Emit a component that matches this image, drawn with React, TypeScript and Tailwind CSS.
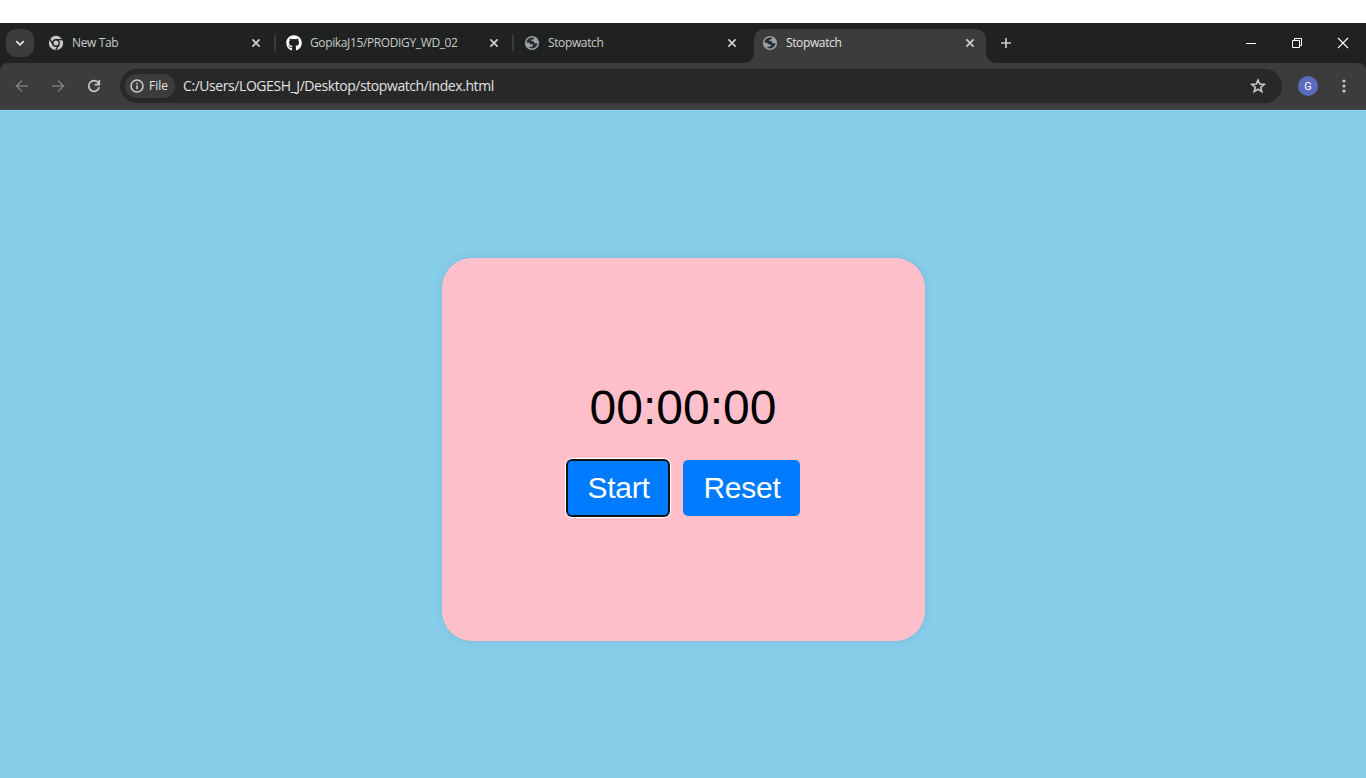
import React from "react";
import { FaGithub } from "react-icons/fa";

const GlobeIcon = () => (
  <svg viewBox="0 0 16 16" className="size-4 shrink-0">
    <circle cx="8" cy="8" r="7.1" fill="#9aa0a6" />
    <path
      d="M2.600 7.800C2.600 4.600 5 2.500 8.500 2.500L10 2.800C10 4 9.500 4.600 8.400 4.600C7.300 4.600 7.100 5.100 7.100 5.900H8.600C9.700 5.900 10.100 6.500 10.100 7.400C10.100 8 10.500 8.300 11.200 8.300H13.400C13.200 11.200 11 13.500 7.800 13.500L5.400 12.800V11.700H7.200C8.200 11.700 8.800 11.200 8.800 10.400C8.800 9.600 8.200 9.300 7.500 9.300C6.600 9.300 6.200 8.900 5.800 8.400C5.400 7.900 4.900 7.800 4.300 7.800Z"
      fill="#292c2e"
    />
  </svg>
);

const ChromeIcon = () => (
  <svg viewBox="0 0 16 16" className="size-4 shrink-0">
    <circle cx="8" cy="8" r="7.2" fill="#c7c9c8" />
    <circle cx="8" cy="8" r="3.900" fill="#202221" />
    <circle cx="8" cy="8" r="2.500" fill="#c7c9c8" />
    <path d="M8 4.700h6.600M5.100 9.700 1.900 4.200M10.900 9.700 7.700 15.200" stroke="#202221" strokeWidth="1.300" fill="none" />
  </svg>
);

const CloseIcon = () => (
  <svg viewBox="0 0 16 16" className="size-4 shrink-0" stroke="#d0d2d1" strokeWidth="1.6" fill="none">
    <path d="m4.400 4.400 7.200 7.200M11.600 4.400l-7.200 7.200" />
  </svg>
);

type TabProps = { icon: React.ReactNode; title: string; separator?: boolean };

const Tab = ({ icon, title, separator }: TabProps) => (
  <div className="flex h-10 w-[238px] shrink-0 items-center pl-[11px]">
    {icon}
    <span className="ml-2 w-[176px] shrink-0 text-[12px] leading-4 tracking-[-0.37px] whitespace-nowrap text-[#c9cbca]">
      {title}
    </span>
    <CloseIcon />
    {separator && <span className="ml-[10px] h-4 w-[2px] shrink-0 bg-[#3a3c3b]" />}
  </div>
);

const TabStrip = () => (
  <div className="flex h-10 bg-[#202221]">
    <button className="mt-[6px] ml-[6px] flex size-7 shrink-0 items-center justify-center rounded-[10px] bg-[#3c3c3c]">
      <svg viewBox="0 0 10 10" className="size-[10px]" fill="none" stroke="#e8e8e8" strokeWidth="1.8">
        <path d="m1.300 3.200 3.700 3.600 3.700-3.600" />
      </svg>
    </button>
    <div className="ml-[3px] flex">
      <Tab icon={<ChromeIcon />} title="New Tab" separator />
      <Tab icon={<FaGithub className="size-4 shrink-0 text-white" />} title="GopikaJ15/PRODIGY_WD_02" separator />
      <Tab icon={<GlobeIcon />} title="Stopwatch" />
    </div>
    <div className="-ml-[7px] flex h-10 w-[252px] items-end">
      <svg viewBox="0 0 10 10" className="size-[10px] shrink-0">
        <path d="M10 0v10H0C5.500 10 10 5.500 10 0z" fill="#3c3c3c" />
      </svg>
      <div className="flex h-[34px] w-[232px] shrink-0 items-center rounded-t-[10px] bg-[#3c3c3c] pb-[6px] pl-2">
        <GlobeIcon />
        <span className="ml-2 w-[176px] text-[12px] leading-4 tracking-[-0.37px] whitespace-nowrap text-[#e3e3e3]">Stopwatch</span>
        <CloseIcon />
      </div>
      <svg viewBox="0 0 10 10" className="size-[10px] shrink-0">
        <path d="M0 0v10h10C4.500 10 0 5.500 0 0z" fill="#3c3c3c" />
      </svg>
    </div>
    <svg viewBox="0 0 12 12" className="mt-[14px] ml-1 size-3 shrink-0" stroke="#c7c9c8" strokeWidth="1.700">
      <path d="M6 1v10M1 6h10" />
    </svg>
    <div className="ml-auto flex">
      <div className="flex h-10 w-[46px] items-center justify-center">
        <svg viewBox="0 0 12 12" className="size-3" stroke="#fff">
          <path d="M1 6.500h10" />
        </svg>
      </div>
      <div className="flex h-10 w-[46px] items-center justify-center">
        <svg viewBox="0 0 12 12" className="size-3" stroke="#fff" fill="none">
          <path d="M1.500 3.500h7v7h-7zM3.500 3.500v-2h7v7h-2" />
        </svg>
      </div>
      <div className="flex h-10 w-[46px] items-center justify-center">
        <svg viewBox="0 0 12 12" className="size-3" stroke="#fff" strokeWidth="1.100">
          <path d="m1 1 10 10M11 1 1 11" />
        </svg>
      </div>
    </div>
  </div>
);

const Toolbar = () => (
  <div className="bg-[#202221]">
    <div className="flex h-[47px] items-center rounded-t-[8px] border-b border-[#484848] bg-[#3c3c3c] pl-[14px]">
      <svg viewBox="0 0 16 16" className="size-4" stroke="#7b7b7b" strokeWidth="1.500" fill="none">
        <path d="M14 8H2.800M8 2.500 2.500 8 8 13.500" />
      </svg>
      <svg viewBox="0 0 16 16" className="ml-5 size-4" stroke="#7b7b7b" strokeWidth="1.500" fill="none">
        <path d="M2 8h11.200M8 2.500 13.500 8 8 13.500" />
      </svg>
      <svg viewBox="0 0 16 16" className="ml-5 size-4" stroke="#c7c7c7" strokeWidth="1.700" fill="none">
        <path d="M13.200 9.200A5.300 5.300 0 1 1 12.400 5L13.300 6.200M13.300 2v4.700H8.800" />
      </svg>
      <div className="ml-[18px] flex h-[34px] w-[1162px] items-center rounded-full bg-[#282828] pr-4 pl-[5px]">
        <div className="flex h-6 w-[50px] items-center rounded-full bg-[#3c3c3c] pl-1">
          <svg viewBox="0 0 16 16" className="size-4" stroke="#d0d0d0" strokeWidth="1.500" fill="none">
            <circle cx="8" cy="8" r="6" />
            <path d="M8 7.200v4M8 4.700v1.500" />
          </svg>
          <span className="ml-1 text-[12px] leading-4 text-[#e3e3e3]">File</span>
        </div>
        <span className="ml-2 text-[14px] leading-5 tracking-[-0.43px] whitespace-nowrap text-[#e3e3e3]">
          C:/Users/LOGESH_J/Desktop/stopwatch/index.html
        </span>
        <svg viewBox="0 0 16 16" className="ml-auto size-4" stroke="#c7c7c7" strokeWidth="1.600" fill="none">
          <path d="m8 2.100 1.700 4 4.400.400-3.400 2.800 1.100 4.300L8 11.300l-3.800 2.300 1.100-4.300-3.400-2.800 4.400-.400z" />
        </svg>
      </div>
      <div className="ml-4 flex size-5 items-center justify-center rounded-full bg-[#5c6bc0] font-[Roboto] text-[11px] leading-none text-white">
        G
      </div>
      <svg viewBox="0 0 16 16" className="ml-[18px] size-4" fill="#c7c7c7">
        <circle cx="8" cy="3" r="1.600" />
        <circle cx="8" cy="8" r="1.600" />
        <circle cx="8" cy="13" r="1.600" />
      </svg>
    </div>
  </div>
);

const Stopwatch = () => (
  <main className="flex flex-1 justify-center bg-[#87ceeb] pt-[148px] pl-px font-['Liberation_Sans',Arial,sans-serif]">
    <div className="flex h-[383px] w-[483px] flex-col items-center rounded-[30px] bg-[#ffc0cb] shadow-[0_0_10px_rgba(0,0,0,0.1)]">
      <div className="mt-[122px] pr-px text-[48px] leading-[55px] text-black">00:00:00</div>
      <div className="mt-[25px] flex gap-[14px] text-[30px] leading-none text-white">
        <button className="h-14 w-[102px] rounded-[5px] bg-[#007bff] pl-px tracking-[-0.25px] shadow-[0_0_0_1px_#101010,0_0_0_2px_#fff,inset_0_0_0_1px_#101010]">
          Start
        </button>
        <button className="h-14 w-[117px] rounded-[5px] bg-[#007bff] pl-px tracking-[-0.25px]">Reset</button>
      </div>
    </div>
  </main>
);

export default function App() {
  return (
    <div className="flex h-[778px] w-[1366px] flex-col overflow-hidden bg-white pt-[23px] font-['Open_Sans','Noto_Sans',sans-serif]">
      <TabStrip />
      <Toolbar />
      <Stopwatch />
    </div>
  );
}
